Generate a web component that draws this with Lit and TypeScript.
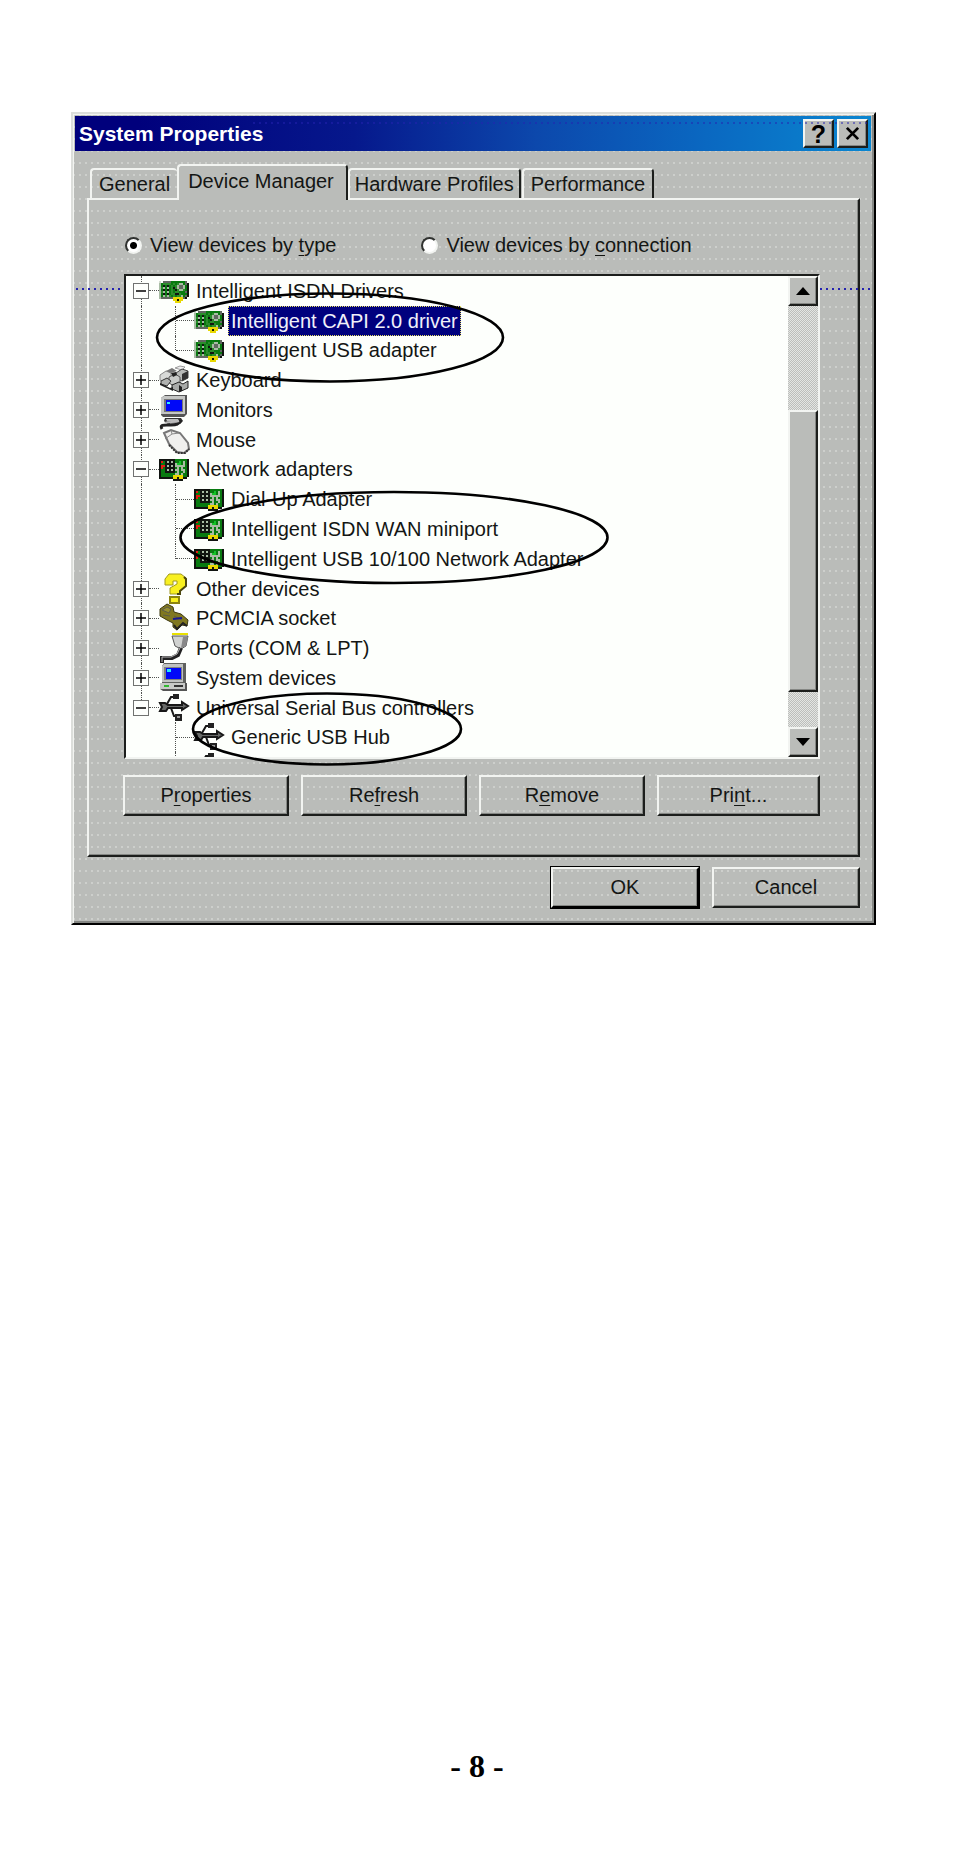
import { LitElement, html, svg, css, nothing } from "lit";
import { customElement, property, state } from "lit/decorators.js";

type IconName =
  | "isdn" | "net" | "keyboard" | "monitor" | "mouse"
  | "question" | "pcmcia" | "port" | "system" | "usb";

interface Device {
  label: string;
  icon: IconName;
  level: 0 | 1;
  open?: boolean;
  last?: boolean;
  afterRoot?: boolean;
}

const palette: Record<string, string> = {
  K: "#101410", R: "#e81c10", G: "#087a10", L: "#14c428",
  S: "#a8bca4", Y: "#e8d800", D: "#606860", M: "#2c8c2c", W: "#d4dcd0",
};

/* Expansion cards are drawn on a 15-column grid, one letter per cell. */
const cards: Record<string, string[]> = {
  net: [
    "KKKKKKKKGGGGGGK",
    "KRGKSKSKGGLGSGK",
    "KGGKKKKKSLLGSGK",
    "KRRKSKSKSSSSSGK",
    "KRGKKKKKGSGSGGK",
    "KGGKSKSKSSGSSGK",
    "KGGKKKKKGSGGSGK",
    "KGGGGGGGSSGSGGK",
    "KGGGGGGYYYYYGGK",
    "KKKKKKKYYKYYKK.",
    ".......KKKKK...",
  ],
  isdn: [
    "W.DDDDGGGGGGGD.",
    "SGMMMMGMGMSSGDK",
    "SGKGKGMGMSDDSGK",
    "SMSGSGMKMSDDSGK",
    "SGKGKGMGKMSSMGK",
    "SMSGSGMGMMGGGDK",
    "SGKGKGMMKKMGGGK",
    "SGSMSMGMGMMSGDK",
    "SDDDDDDYYYYYDK.",
    ".......YYKYY...",
    "........YYY....",
  ],
};

const cardIcon = (rows: string[]) =>
  rows.map((row, y) =>
    [...row].map((c, x) =>
      c === "."
        ? nothing
        : svg`<rect x=${x * 2} y=${y * 2 + 5} width="2" height="2" fill=${palette[c]}></rect>`,
    ),
  );

const drawings: Record<string, unknown> = {
  keyboard: svg`
    <path d="M16 3l5-2 5 1-3 3z" fill="#eee" stroke="#999"/>
    <path d="M1 10l6-4 5 2v6l-6 4-5-3z" fill="#d8dad8" stroke="#888"/>
    <path d="M7 6l5 2 6-2-5-3z" fill="#777"/>
    <path d="M17 8l6-4 6 2v7l-6 3-6-3z" fill="#b8bab8" stroke="#444"/>
    <path d="M23 9l6-3v7l-6 3z" fill="#333"/>
    <path d="M10 12l6-3 5 3v6l-6 3-5-3z" fill="#c8cac8" stroke="#555"/>
    <path d="M12 8l5-1 1 3-4 2z" fill="#222"/>
    <path d="M2 16l6-3 4 3-4 5-6-2z" fill="#b0b2b0" stroke="#333"/>
    <path d="M13 20l7-3 4 2 5-3v7l-9 4-7-3z" fill="#a8aaa8" stroke="#222"/>
    <path d="M20 20l3 2v4l-3 1zM1 18l10 5 3-1v4L1 20z" fill="#222"/>`,
  monitor: svg`
    <path d="M2 3L6 0H28V19L25 22H4L2 20z" fill="#555"/>
    <path d="M2 3L5 1H26V19H2z" fill="#c4c6c4"/>
    <path d="M5 4H24V17H5z" fill="#777"/>
    <path d="M7 5H23V16H7z" fill="#0008f8"/>
    <path d="M8 7H11V9H8z" fill="#30e8ff"/>
    <path d="M6 23H22L24 26 21 29H8L5 26z" fill="#333"/>
    <path d="M7 24H19L20 26H8z" fill="#bbb"/>
    <path d="M11 28H19V31H11z" fill="#aaa"/>`,
  system: svg`
    <path d="M3 3L5 0H27V20H3z" fill="#606260"/>
    <path d="M3 3L5 1H24V19H3z" fill="#c0c2c0"/>
    <path d="M5 4H23V17H5z" fill="#808280"/>
    <path d="M7 5H22V16H7z" fill="#0008f8"/>
    <path d="M8 6H12V9H8z" fill="#20e8ff"/>
    <path d="M1 20H28V28H4L1 26z" fill="#555"/>
    <path d="M1 20H26V26H1z" fill="#c8cac8"/>
    <path d="M5 22H10V24H5z" fill="#30b830"/>
    <path d="M15 22H24V24H15z" fill="#333"/>`,
  mouse: svg`
    <path d="M3 4C0-1 6 0 12 0S21-2 22-5" fill="none" stroke="#222" stroke-width="3"/>
    <path d="M6-2C10-4 15-2 20-4" fill="none" stroke="#bbb" stroke-width="2"/>
    <path d="M5 8L12 5 21 8 29 18 30 24 25 28 18 27 10 19z" fill="#f0f0ee" stroke="#777" stroke-width="2"/>
    <path d="M6 14L13 9 20 8M13 9L12 5" fill="none" stroke="#888"/>
    <path d="M10 20L18 28 26 28 30 24" fill="none" stroke="#333" stroke-width="2" stroke-dasharray="2 1"/>`,
  question: svg`
    <path d="M6 5L10 0H22L27 4V12L21 17V20H11V14L18 10V7H14V11H6z" fill="#f8f020" stroke="#a09820"/>
    <path d="M25 3L27 5V12L21 17V20H18" fill="none" stroke="#4c4810" stroke-width="2"/>
    <path d="M11 23H20V29H11z" fill="#f8f020" stroke="#8c8410" stroke-width="2"/>`,
  pcmcia: svg`
    <path d="M1 6L8 1 14 4 15 9 22 11 29 17 28 23 23 22 18 27 14 24 14 20 8 17 1 13z" fill="#807820" stroke="#3c3810" stroke-width="1"/>
    <path d="M3 7L8 4 12 6 10 10zM4 12L11 13M15 13L23 17" fill="#989030" stroke="#5c5c48"/>
    <path d="M14 16L23 15" stroke="#181890" stroke-width="2"/>
    <path d="M15 22L18 26 24 20 28 23" fill="none" stroke="#222" stroke-width="2"/>`,
  port: svg`
    <path d="M13 0H29V2H13z" fill="#e8e000"/>
    <path d="M13 3H29L27 13 22 16 16 13z" fill="#d0d2d0" stroke="#555"/>
    <path d="M24 4H29L27 13 22 15z" fill="#888"/>
    <path d="M22 15L19 22 13 25H3V30" fill="none" stroke="#222" stroke-width="4"/>
    <path d="M21 15L18 21 12 24H3V29" fill="none" stroke="#bbb" stroke-width="1"/>`,
  usb: svg`
    <path d="M1 10H6L9 12H23V9L29 13 23 17V15H9L7 18H1L3 14z" fill="#686a68" stroke="#181818" stroke-width="2"/>
    <path d="M8 11L12 4H16M12 15L15 23H19" fill="none" stroke="#181818" stroke-width="2"/>
    <path d="M14 1H20V6H14z" fill="#222"/>
    <path d="M16 21H23V28H16z" fill="#222"/>
    <path d="M18 23H21V25H18z" fill="#999"/>`,
};

@customElement("device-icon")
export class DeviceIcon extends LitElement {
  static styles = css`
    :host { display: block; width: 30px; height: 30px; flex: none; }
    .glyph { display: block; width: 30px; height: 30px; overflow: visible; }
  `;
  @property() name: IconName = "net";

  render() {
    const card = cards[this.name];
    return card
      ? html`<svg class="glyph" viewBox="0 0 30 30" shape-rendering="crispEdges" aria-hidden="true">${cardIcon(card)}</svg>`
      : html`<svg class="glyph" viewBox="0 0 30 30" aria-hidden="true">${drawings[this.name]}</svg>`;
  }
}

const devices: Device[] = [
  { label: "Intelligent ISDN Drivers", icon: "isdn", level: 0, open: true },
  { label: "Intelligent CAPI 2.0 driver", icon: "isdn", level: 1 },
  { label: "Intelligent USB adapter", icon: "isdn", level: 1, last: true },
  { label: "Keyboard", icon: "keyboard", level: 0 },
  { label: "Monitors", icon: "monitor", level: 0 },
  { label: "Mouse", icon: "mouse", level: 0 },
  { label: "Network adapters", icon: "net", level: 0, open: true },
  { label: "Dial-Up Adapter", icon: "net", level: 1 },
  { label: "Intelligent ISDN WAN miniport", icon: "net", level: 1 },
  { label: "Intelligent USB 10/100 Network Adapter", icon: "net", level: 1, last: true },
  { label: "Other devices", icon: "question", level: 0 },
  { label: "PCMCIA socket", icon: "pcmcia", level: 0 },
  { label: "Ports (COM & LPT)", icon: "port", level: 0 },
  { label: "System devices", icon: "system", level: 0 },
  { label: "Universal Serial Bus controllers", icon: "usb", level: 0, open: true, last: true },
  { label: "Generic USB Hub", icon: "usb", level: 1, afterRoot: true },
  { label: "", icon: "usb", level: 1, afterRoot: true },
];

@customElement("app-root")
export class AppRoot extends LitElement {
  static styles = css`
    :host {
      display: block;
      min-height: 100vh;
      box-sizing: border-box;
      padding: 112px 78px 0 71px;
      background: #fff;
      color: #141614;
      font: 20px/24px "Liberation Sans", Arial, sans-serif;
      --face: #babcb9;
      --light: #f2f4f1;
      --shade: #858784;
      --dark: #1c1e1c;
    }
    *, *::before, *::after { box-sizing: border-box; }
    button {
      font: inherit;
      color: inherit;
      padding: 0;
      margin: 0;
      border-radius: 0;
      background: transparent;
    }
    u { text-decoration-thickness: 1px; text-underline-offset: 3px; }

    .window {
      position: relative;
      border: 2px solid;
      border-color: #dcdedb #000 #000 #dcdedb;
      box-shadow: inset 1px 1px var(--light), inset -2px -2px var(--shade);
      background: radial-gradient(circle at 1px 1px, #cdcfcc 1px, transparent 1px) 0 0 / 6px 12px var(--face);
    }
    .titlebar {
      display: flex;
      align-items: center;
      gap: 3px;
      height: 35px;
      margin: 2px 3px 0 2px;
      padding: 0 3px 0 4px;
      background: linear-gradient(90deg, #00007c 8%, #06188c 35%, #0c48ac 58%, #0a66c0 78%, #0a86d0 100%);
      color: #fff;
    }
    .title { flex: 1; margin: 0; font-size: 21px; line-height: 24px; }
    .caption {
      display: grid;
      place-items: center;
      width: 31px;
      height: 29px;
      color: #000;
      background: var(--face);
      border: 2px solid;
      border-color: var(--light) var(--dark) var(--dark) var(--light);
      box-shadow: inset -1px -1px var(--shade);
      font-weight: bold;
      font-size: 25px;
      line-height: 24px;
    }
    .noise {
      position: absolute;
      height: 2px;
      background: repeating-linear-gradient(90deg, #2422b0 0 2px, transparent 2px 6px);
    }
    .noise.top { left: 180px; right: 5px; top: 8px; opacity: 0.5; }
    .noise.mid { left: 3px; right: 2px; top: 174px; }

    .body { padding: 13px 14px 15px; }
    .tabs { display: flex; align-items: flex-end; padding-left: 3px; }
    .tab {
      height: 30px;
      padding: 0 7px;
      border: 2px solid;
      border-color: var(--light) var(--dark) transparent var(--light);
      border-bottom: 0;
      border-radius: 4px 4px 0 0;
      white-space: nowrap;
    }
    .tab.first { border-right: 0; }
    .tab.narrow { padding: 0 5px; }
    .tab.active {
      position: relative;
      height: 36px;
      margin-bottom: -2px;
      padding: 0 12px 4px 9px;
      background: var(--face);
    }
    .tab + .tab.wide { margin-left: 1px; }
    .panel {
      padding: 33px 38px 39px 34px;
      border: 2px solid;
      border-color: var(--light) var(--dark) var(--dark) var(--light);
      box-shadow: inset -1px -1px var(--shade);
    }
    .modes { display: flex; gap: 85px; padding-left: 2px; margin-bottom: 17px; }
    .mode { display: flex; align-items: center; gap: 8px; }
    .radio {
      appearance: none;
      width: 17px;
      height: 17px;
      margin: 0;
      border: 2px solid;
      border-color: #303230 var(--light) var(--light) #303230;
      border-radius: 50%;
      background: #fff;
    }
    .radio:checked { background: radial-gradient(circle, #000 3px, #fff 4px); }

    .listwrap { position: relative; margin-left: 1px; }
    .list {
      display: flex;
      height: 485px;
      border: 2px solid;
      border-color: var(--dark) var(--light) var(--light) var(--dark);
      background: #fdfffc;
      overflow: hidden;
    }
    .tree {
      flex: 1;
      display: grid;
      grid-template-rows: repeat(17, 1fr);
      height: 506px;
      margin: 0;
      padding: 0;
      list-style: none;
    }
    .row { display: flex; align-items: center; min-height: 0; padding-left: 7px; white-space: nowrap; }
    .gutter { position: relative; display: grid; place-items: center; width: 16px; height: 100%; flex: none; }
    .line::before {
      content: "";
      position: absolute;
      left: 8px;
      top: 0;
      bottom: 0;
      border-left: 1px dotted #505250;
    }
    .line.end::before { bottom: 50%; }
    .toggle {
      position: relative;
      width: 16px;
      height: 16px;
      border: 1px solid #707270;
      background: #fdfffc;
    }
    .sign { display: block; width: 14px; height: 14px; }
    .dash { width: 10px; border-top: 1px dotted #505250; flex: none; }
    .dash.deep { width: 18px; margin-left: -7px; }
    .indent { width: 18px; flex: none; }
    .name { margin-left: 5px; padding: 3px 2px; }
    .row.child .name { margin-left: 4px; padding: 3px; }
    .name.selected { background: #00007e; color: #f0f0fa; outline: 1px dotted #e8e060; outline-offset: -1px; }

    .scroll {
      display: flex;
      flex-direction: column;
      width: 30px;
      height: 481px;
      background: repeating-conic-gradient(#bcbebb 0 25%, #e4e6e3 0 50%) 0 0 / 2px 2px;
    }
    .bevel {
      background: var(--face);
      border: 2px solid;
      border-color: var(--light) var(--dark) var(--dark) var(--light);
      box-shadow: inset -1px -1px var(--shade);
    }
    .arrow { display: grid; place-items: center; height: 30px; flex: none; }
    .thumb { flex: 281; }
    .above { flex: 105; }
    .below { flex: 35; }
    .marks { position: absolute; left: 2px; top: 2px; width: 1px; height: 1px; overflow: visible; pointer-events: none; }

    .actions {
      display: grid;
      grid-template-columns: 166fr 166fr 166fr 163fr;
      gap: 12px;
      margin-top: 16px;
    }
    .push {
      height: 41px;
      padding-bottom: 2px;
      border: 2px solid;
      border-color: var(--light) var(--dark) var(--dark) var(--light);
      box-shadow: inset -1px -1px var(--shade);
    }
    .push.default { outline: 1px solid #000; border-color: var(--light) #000 #000 var(--light); }
    .footer { display: flex; justify-content: flex-end; gap: 13px; margin-top: 10px; }
    .footer .push { width: 148px; }

    .folio {
      margin: 825px 0 0 7px;
      text-align: center;
      font: bold 32px/32px "Liberation Serif", "Times New Roman", serif;
      color: #000;
    }
  `;

  @state() private selected = 1;
  @state() private mode = "type";

  private row(d: Device, i: number) {
    const label = html`<span class="name ${i === this.selected ? "selected" : ""}">${d.label}</span>`;
    if (d.level === 0) {
      return html`<li class="row" role="treeitem" aria-expanded=${d.open ? "true" : "false"}>
        <span class="gutter line ${d.last ? "end" : ""}">
          <button class="toggle" aria-label=${(d.open ? "Collapse " : "Expand ") + d.label}>
            <svg class="sign" viewBox="0 0 14 14" aria-hidden="true">
              <path d=${d.open ? "M2 7H12" : "M2 7H12M7 2V12"} stroke="#000" stroke-width="1.5"></path>
            </svg>
          </button>
        </span>
        <span class="dash"></span><device-icon .name=${d.icon}></device-icon>${label}
      </li>`;
    }
    return html`<li class="row child" role="treeitem" @click=${() => (this.selected = i)}>
      <span class="gutter ${d.afterRoot ? "" : "line"}"></span>
      <span class="indent"></span>
      <span class="gutter line ${d.last ? "end" : ""}"></span>
      <span class="dash deep"></span><device-icon .name=${d.icon}></device-icon>${label}
    </li>`;
  }

  render() {
    return html`
      <section class="window" role="dialog" aria-labelledby="title">
        <header class="titlebar">
          <h1 class="title" id="title">System Properties</h1>
          <button class="caption">?</button>
          <button class="caption" aria-label="Close">
            <svg width="15" height="15" viewBox="0 0 16 16" aria-hidden="true">
              <path d="M2 2L14 14M14 2L2 14" stroke="#000" stroke-width="3"></path>
            </svg>
          </button>
        </header>
        <div class="noise top"></div>
        <div class="noise mid"></div>
        <div class="body">
          <div class="tabs" role="tablist">
            <button class="tab first" role="tab">General</button>
            <button class="tab active" role="tab" aria-selected="true">Device Manager</button>
            <button class="tab narrow" role="tab">Hardware Profiles</button>
            <button class="tab wide" role="tab">Performance</button>
          </div>
          <div class="panel" role="tabpanel">
            <div class="modes">
              <label class="mode">
                <input class="radio" type="radio" name="view" .checked=${this.mode === "type"}
                  @change=${() => (this.mode = "type")} />
                <span>View devices by <u>t</u>ype</span>
              </label>
              <label class="mode">
                <input class="radio" type="radio" name="view" .checked=${this.mode === "connection"}
                  @change=${() => (this.mode = "connection")} />
                <span>View devices by <u>c</u>onnection</span>
              </label>
            </div>
            <div class="listwrap">
              <div class="list">
                <ul class="tree" role="tree">${devices.map((d, i) => this.row(d, i))}</ul>
                <div class="scroll">
                  <button class="bevel arrow" aria-label="Scroll up">
                    <svg width="14" height="8" viewBox="0 0 14 8" aria-hidden="true"><path d="M0 8L7 0L14 8z"></path></svg>
                  </button>
                  <div class="above"></div>
                  <div class="bevel thumb"></div>
                  <div class="below"></div>
                  <button class="bevel arrow" aria-label="Scroll down">
                    <svg width="14" height="8" viewBox="0 0 14 8" aria-hidden="true"><path d="M0 0L7 8L14 0z"></path></svg>
                  </button>
                </div>
              </div>
              <svg class="marks" aria-hidden="true" fill="none" stroke="#000" stroke-width="2.6">
                <ellipse cx="204" cy="61.5" rx="173" ry="44"></ellipse>
                <ellipse cx="268" cy="261.5" rx="213.5" ry="45.5"></ellipse>
                <ellipse cx="201" cy="453" rx="134" ry="35.5"></ellipse>
              </svg>
            </div>
            <div class="actions">
              <button class="push">P<u>r</u>operties</button>
              <button class="push">Re<u>f</u>resh</button>
              <button class="push">R<u>e</u>move</button>
              <button class="push">Pri<u>n</u>t...</button>
            </div>
          </div>
          <div class="footer">
            <button class="push default">OK</button>
            <button class="push">Cancel</button>
          </div>
        </div>
      </section>
      <p class="folio">- 8 -</p>
    `;
  }
}
